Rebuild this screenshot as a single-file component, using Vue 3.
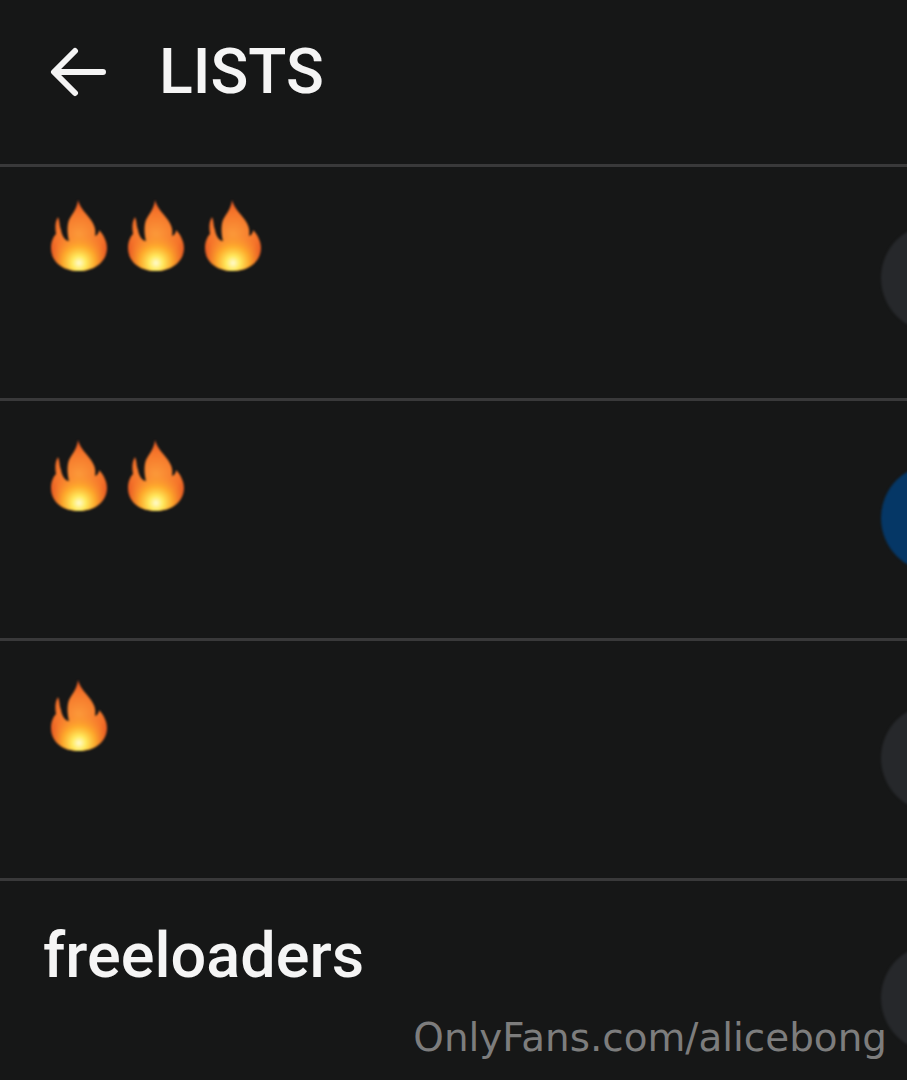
<script setup>
const lists = [
  { id: 1, flames: 3, name: '', avatar: 'grey' },
  { id: 2, flames: 2, name: '', avatar: 'blue' },
  { id: 3, flames: 1, name: '', avatar: 'grey' },
  { id: 4, flames: 0, name: 'freeloaders', avatar: 'grey' },
];
</script>

<template>
  <div class="screen">
    <svg width="0" height="0" class="defs">
      <defs>
        <path
          id="flame-shape"
          d="M29 1C31 9 37 14 42 21C46 27 47 31 46 37C49 36 50 33 50 31C55 36 58 43 58 49C58 63 45 72 30 72C14 72 2 63 2 49C2 43 4 38 7 35C6 28 6 23 9 18C11 22 10 26 12 31C13 37 16 42 20 42C18 34 18 26 20 21C23 15 28 10 29 1Z"
        />
        <radialGradient id="flame-base" gradientUnits="userSpaceOnUse" cx="30" cy="36" r="42">
          <stop offset="0" stop-color="#fc9a3a" />
          <stop offset="0.55" stop-color="#f5742a" />
          <stop offset="1" stop-color="#d9401c" />
        </radialGradient>
        <radialGradient id="flame-glow" gradientUnits="userSpaceOnUse" cx="30" cy="64" r="30">
          <stop offset="0" stop-color="#fffbd0" />
          <stop offset="0.24" stop-color="#ffe95c" />
          <stop offset="0.55" stop-color="#ffb42c" stop-opacity="0.85" />
          <stop offset="1" stop-color="#fb8a2c" stop-opacity="0" />
        </radialGradient>
      </defs>
    </svg>

    <header class="top">
      <svg class="back" width="56" height="52" viewBox="0 0 56 52">
        <path d="M53 26H5M25 5 4 26l21 21" fill="none" stroke="#f4f4f4" stroke-width="6" stroke-linecap="round" stroke-linejoin="round" />
      </svg>
      <h1 class="title">LISTS</h1>
    </header>

    <ul class="rows">
      <li v-for="list of lists" :key="list.id" class="row">
        <div class="label">
          <div v-if="list.flames" class="flames">
            <svg v-for="n in list.flames" :key="n" class="flame" width="60" height="74" viewBox="0 0 60 74">
              <use href="#flame-shape" fill="url(#flame-base)" />
              <use href="#flame-shape" fill="url(#flame-glow)" />
            </svg>
          </div>
          <span v-else class="name">{{ list.name }}</span>
        </div>
        <div class="avatar" :class="list.avatar"></div>
      </li>
    </ul>

    <div class="mark">OnlyFans.com/alicebong</div>
  </div>
</template>

<style>
html,
body {
  margin: 0;
  background: #161717;
}
</style>

<style scoped>
.screen {
  position: relative;
  width: 907px;
  height: 1080px;
  overflow: hidden;
  background: #161717;
  font-family: Roboto, "Liberation Sans", sans-serif;
}

.defs {
  position: absolute;
}

.top {
  display: flex;
  align-items: center;
  gap: 53px;
  height: 164px;
  padding-left: 50px;
  box-sizing: border-box;
  padding-bottom: 20px;
}

.back {
  display: block;
}

.title {
  margin: 0;
  color: #f5f5f5;
  font-size: 62.5px;
  font-weight: 500;
  line-height: 1;
}

.rows {
  margin: 0;
  padding: 0;
  list-style: none;
}

.row {
  display: flex;
  justify-content: space-between;
  height: 231px;
  border-top: 3px solid #39393a;
}

.row + .row {
  height: 237px;
}

.label {
  padding: 32px 0 0 49px;
}

.row + .row .label {
  padding-top: 38px;
}

.flames {
  display: flex;
  gap: 17px;
}

.flame {
  display: block;
  filter: blur(0.8px);
}

.name {
  display: block;
  margin: -3px 0 0 -6px;
  color: #f5f5f5;
  font-size: 63px;
  font-weight: 500;
  line-height: 80px;
}

.avatar {
  flex: none;
  width: 108px;
  height: 108px;
  margin: 57px -82px 0 0;
  border-radius: 50%;
  filter: blur(1px);
}

.row + .row .avatar {
  margin-top: 63px;
}

.grey {
  background: #26282b;
}

.blue {
  background: #053766;
}

.mark {
  position: absolute;
  right: 20px;
  bottom: 19px;
  color: #7d7d7d;
  font-family: "DejaVu Sans", sans-serif;
  font-size: 38.9px;
  line-height: 46px;
}
</style>
